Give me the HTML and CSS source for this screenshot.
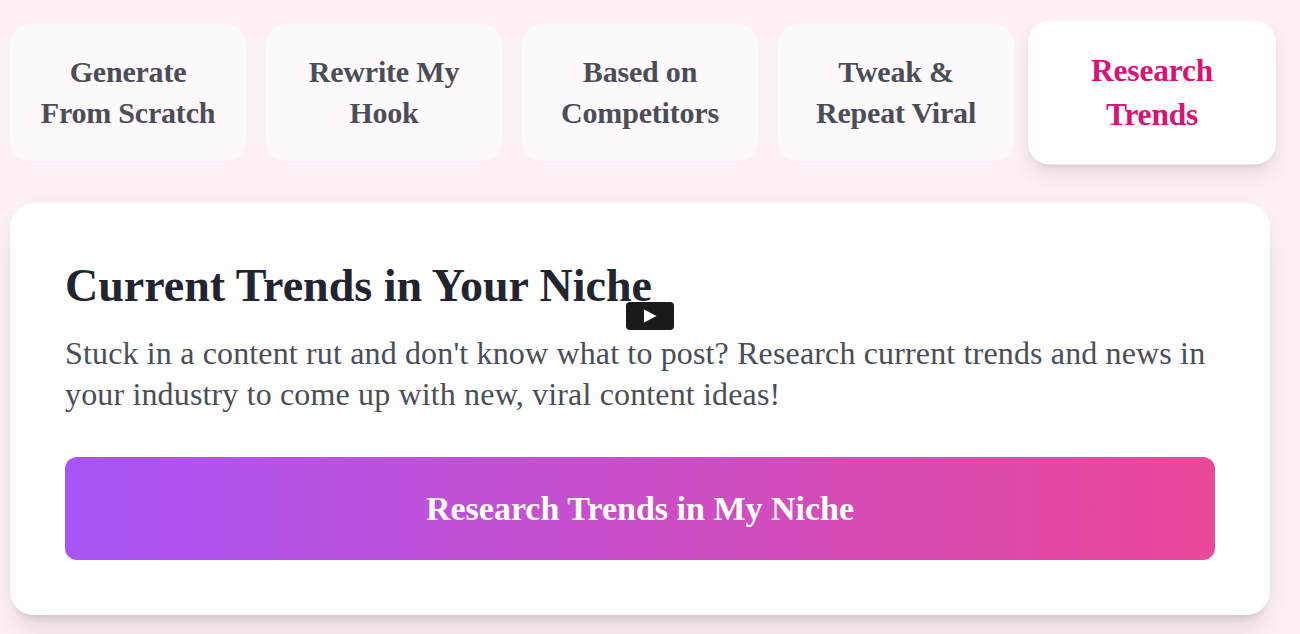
FILE: index.html
```html
<!DOCTYPE html>
<html lang="en">
<head>
  <meta charset="UTF-8">
  <meta name="viewport" content="width=device-width, initial-scale=1.0">
  <title>Current Trends in Your Niche</title>
  <link rel="stylesheet" href="styles.css">
</head>
<body>

  <!-- Mode tabs -->
  <div class="tabs">
    <button class="tab">Generate From Scratch</button>
    <button class="tab">Rewrite My Hook</button>
    <button class="tab">Based on Competitors</button>
    <button class="tab">Tweak &amp; Repeat Viral</button>
    <button class="tab active">Research Trends</button>
  </div>

  <div class="card">
    <h2>Current Trends in Your Niche</h2>
    <p>Stuck in a content rut and don't know what to post? Research current trends and news in your industry to come up with new, viral content ideas!</p>
    <button class="cta">Research Trends in My Niche</button>
  </div>

  <!-- Video play badge sits over the card -->
  <div class="play-badge">
    <svg width="14" height="14" viewBox="0 0 14 14"><path d="M1 0.5 L13.5 7 L1 13.5 Z" fill="#fff"/></svg>
  </div>

</body>
</html>
```

FILE: styles.css
```css
body {
  font-family: "Liberation Serif", "DejaVu Serif", serif;
  background-color: #fdf1f7;
  margin: 0;
  padding: 24px 30px 0 10px;
  height: 634px;
  box-sizing: border-box;
  overflow: hidden;
}
.tabs {
  display: grid;
  grid-template-columns: repeat(5, 1fr);
  gap: 20px;
  margin-bottom: 42px;
}
.tab {
  height: 137px;
  padding: 0 24px 2px;
  background-color: rgba(255, 255, 255, 0.6);
  border: none;
  border-radius: 20px;
  color: #4b4d57;
  font-family: inherit;
  font-size: 30px;
  font-weight: bold;
  letter-spacing: -0.2px;
  line-height: 41px;
  text-align: center;
}
.tab.active {
  background-color: #fff;
  color: #db1274;
  transform: scale(1.05);
  box-shadow: 0 10px 20px -3px rgba(0, 0, 0, 0.12), 0 4px 6px -4px rgba(0, 0, 0, 0.1);
}
.card {
  height: 412px;
  box-sizing: border-box;
  padding: 55px;
  background-color: #fff;
  border-radius: 24px;
  box-shadow: 0 20px 25px -5px rgba(0, 0, 0, 0.1), 0 8px 10px -6px rgba(0, 0, 0, 0.1), 0 0 14px rgba(0, 0, 0, 0.03);
}
h2 {
  margin: 0 0 20px 0;
  color: #22242f;
  font-size: 46px;
  line-height: 55px;
}
p {
  margin: 0 0 42px 0;
  color: #4b4d57;
  font-size: 32px;
  letter-spacing: 0.15px;
  line-height: 41px;
}
.cta {
  display: block;
  width: 100%;
  height: 103px;
  background: linear-gradient(90deg, #a855f7, #ec4899);
  border: none;
  border-radius: 12px;
  color: #fff;
  font-family: inherit;
  font-size: 34px;
  font-weight: bold;
}
.play-badge {
  position: absolute;
  left: 626px;
  top: 302px;
  width: 48px;
  height: 28px;
  display: flex;
  justify-content: center;
  align-items: center;
  background-color: #1a1a1a;
  border-radius: 4px;
}
```
